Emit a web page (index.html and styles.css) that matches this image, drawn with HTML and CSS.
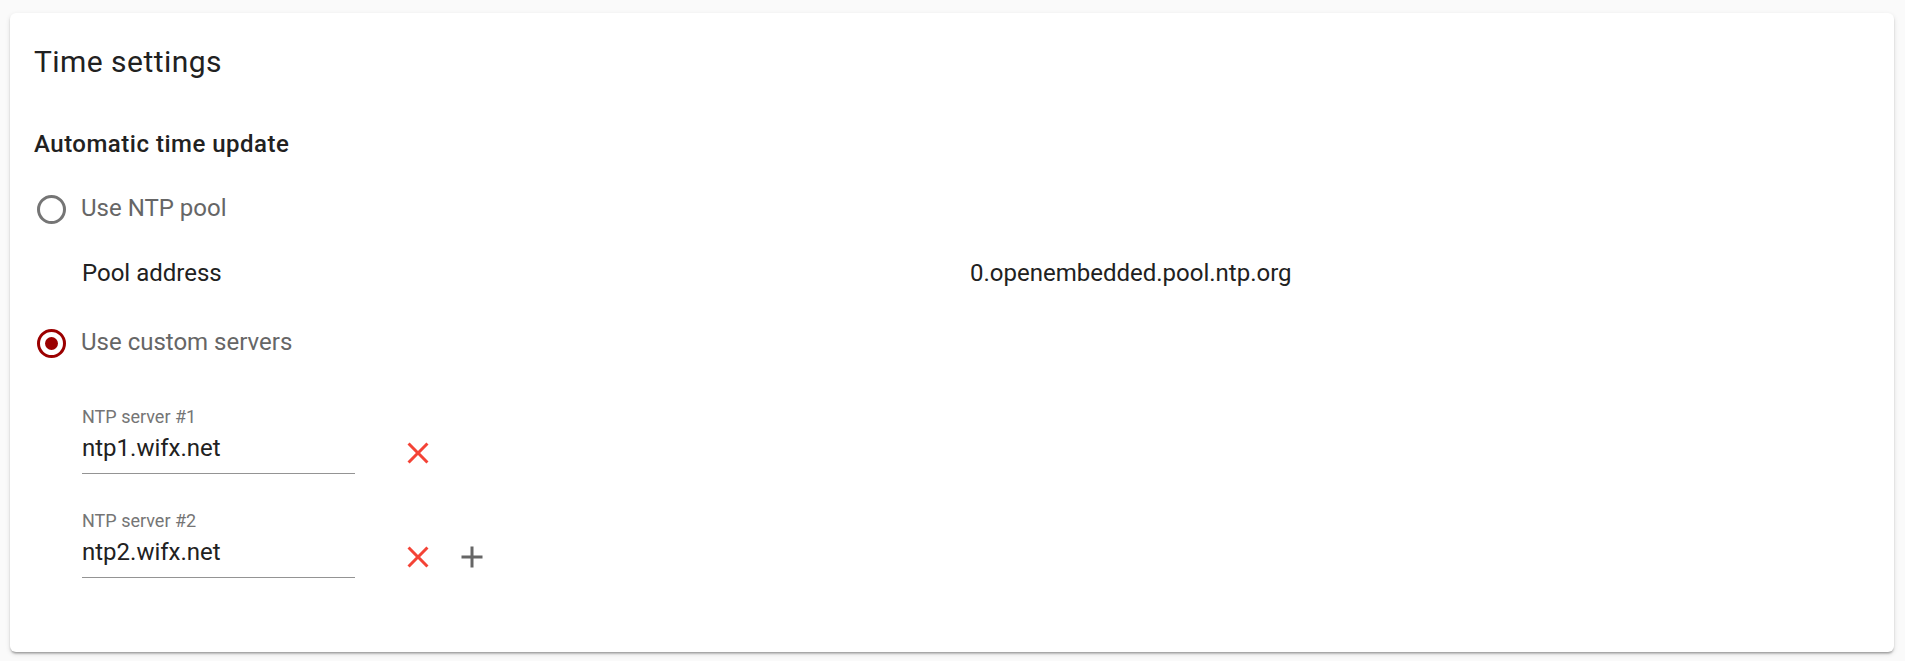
FILE: index.html
```html
<!DOCTYPE html>
<html lang="en">
<head>
<meta charset="utf-8">
<title>Time settings</title>
<link rel="stylesheet" href="styles.css">
</head>
<body>
<div class="card">
  <h1 class="title">Time settings</h1>
  <h2 class="subtitle">Automatic time update</h2>

  <label class="radio-row first">
    <span class="radio"></span>
    <span class="radio-label">Use NTP pool</span>
  </label>

  <div class="pool-row">
    <span class="pool-key">Pool address</span>
    <span class="pool-value">0.openembedded.pool.ntp.org</span>
  </div>

  <label class="radio-row second">
    <span class="radio checked"><span class="dot"></span></span>
    <span class="radio-label">Use custom servers</span>
  </label>

  <div class="servers">
    <div class="server-row">
      <div class="field">
        <div class="field-label">NTP server #1</div>
        <div class="field-value">ntp1.wifx.net</div>
      </div>
      <span class="icon-btn remove">
        <svg viewBox="0 0 24 24" width="36" height="36"><path d="M19 6.41L17.59 5 12 10.59 6.41 5 5 6.41 10.59 12 5 17.59 6.41 19 12 13.41 17.59 19 19 17.59 13.41 12z"/></svg>
      </span>
    </div>
    <div class="server-row">
      <div class="field">
        <div class="field-label">NTP server #2</div>
        <div class="field-value">ntp2.wifx.net</div>
      </div>
      <span class="icon-btn remove">
        <svg viewBox="0 0 24 24" width="36" height="36"><path d="M19 6.41L17.59 5 12 10.59 6.41 5 5 6.41 10.59 12 5 17.59 6.41 19 12 13.41 17.59 19 19 17.59 13.41 12z"/></svg>
      </span>
      <span class="icon-btn add">
        <svg viewBox="0 0 24 24" width="36" height="36"><path d="M19 13h-6v6h-2v-6H5v-2h6V5h2v6h6v2z"/></svg>
      </span>
    </div>
  </div>
</div>
</body>
</html>
```

FILE: styles.css
```css
html, body {
  margin: 0;
  background: #fafafa;
}

body {
  padding: 13px 11px 9px 10px;
  font-family: Roboto, "Noto Sans", "Liberation Sans", sans-serif;
  color: #212121;
}

.card {
  background: #fff;
  border-radius: 6px;
  box-shadow: 0 3px 2px -2px rgba(0, 0, 0, 0.2), 0 2px 2px 0 rgba(0, 0, 0, 0.14), 0 2px 5px 0 rgba(0, 0, 0, 0.12);
  padding: 29px 24px 73px 24px;
  height: 639px;
  box-sizing: border-box;
}

.title {
  margin: 0;
  font-size: 30px;
  line-height: 40px;
  font-weight: 400;
  letter-spacing: 0.45px;
  color: #212121;
}

.subtitle {
  margin: 46px 0 0 0;
  font-size: 24px;
  line-height: 32px;
  font-weight: 500;
  letter-spacing: 0.5px;
  color: #212121;
}

.radio-row {
  display: flex;
  align-items: center;
  height: 40px;
}

.radio-row.first {
  margin-top: 28px;
}

.radio-row.second {
  margin-top: 29px;
}

.radio {
  width: 29px;
  height: 29px;
  box-sizing: border-box;
  border: 3px solid #757575;
  border-radius: 50%;
  margin: 3px 15px 0 3px;
  display: flex;
  align-items: center;
  justify-content: center;
  flex: none;
}

.radio.checked {
  border-color: #9b0000;
}

.dot {
  width: 13px;
  height: 13px;
  border-radius: 50%;
  background: #9b0000;
}

.radio-label {
  font-size: 24px;
  line-height: 40px;
  color: #666;
}

.pool-row {
  margin: 25px 0 0 48px;
  display: grid;
  grid-template-columns: 888px 1fr;
  font-size: 24px;
  line-height: 40px;
  color: #212121;
}

.servers {
  margin: 43px 0 0 48px;
  display: flex;
  flex-direction: column;
  gap: 35px;
}

.server-row {
  display: flex;
  align-items: flex-end;
}

.field {
  width: 273px;
  border-bottom: 1px solid #949494;
  padding-bottom: 9px;
}

.field-label {
  font-size: 18px;
  line-height: 24px;
  color: #757575;
}

.field-value {
  margin-top: 3px;
  font-size: 24px;
  line-height: 32px;
  color: #212121;
}

.icon-btn {
  display: flex;
  width: 36px;
  height: 36px;
  margin-bottom: 3px;
}

.icon-btn.remove {
  margin-left: 45px;
  fill: #f44336;
}

.icon-btn.add {
  margin-left: 18px;
  fill: #666;
}
```
